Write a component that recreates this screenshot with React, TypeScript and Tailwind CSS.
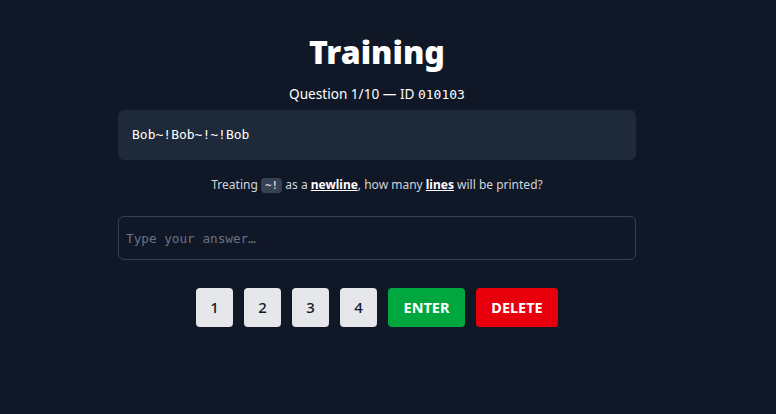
import { useState } from 'react';

const mono = "font-['DejaVu_Sans_Mono',monospace]";

export default function App() {
  const [answer, setAnswer] = useState('');
  const keys = ['1', '2', '3', '4'];

  return (
    <div className="min-h-[414px] bg-gray-900 font-['Noto_Sans',sans-serif] text-white">
      <div className="flex justify-center pr-[22px] pt-[33px]">
        <div className="flex w-[518px] flex-col items-center">
          <h1 className="text-[32px] leading-[38px] font-black">Training</h1>
          <p className="mt-[13px] text-[13.6px] leading-5">
            Question 1/10 — ID <span className={`${mono} text-[13px]`}>010103</span>
          </p>
          <div className={`mt-[5px] h-[50px] w-full rounded-md bg-gray-800 px-[14px] text-[13px] leading-[50px] ${mono}`}>
            Bob~!Bob~!~!Bob
          </div>
          <p className="mt-[15px] text-[12px] leading-5 text-gray-300">
            Treating{' '}
            <code className={`rounded bg-gray-700 px-1 py-[1px] text-[11px] font-bold ${mono}`}>~!</code>{' '}
            as a <span className="font-bold text-white underline">newline</span>, how many{' '}
            <span className="font-bold text-white underline">lines</span> will be printed?
          </p>
          <input
            value={answer}
            onChange={(e) => setAnswer(e.target.value)}
            placeholder="Type your answer…"
            className={`mt-[20px] h-[44px] w-full rounded-md border border-gray-700 bg-gray-900 px-[7px] text-[12.7px] text-white placeholder:text-gray-500 outline-none ${mono}`}
          />
          <div className="mt-[28px] flex gap-[11px]">
            {keys.map((k) => (
              <button
                key={k}
                onClick={() => setAnswer(answer + k)}
                className="h-[39px] w-[37px] rounded bg-gray-200 text-[15px] font-medium text-gray-900"
              >
                {k}
              </button>
            ))}
            <button className="h-[39px] w-[77px] rounded bg-green-600 text-[14.5px] font-bold text-white">ENTER</button>
            <button
              onClick={() => setAnswer('')}
              className="h-[39px] w-[82px] rounded bg-red-600 text-[14.5px] font-bold text-white"
            >
              DELETE
            </button>
          </div>
        </div>
      </div>
    </div>
  );
}
